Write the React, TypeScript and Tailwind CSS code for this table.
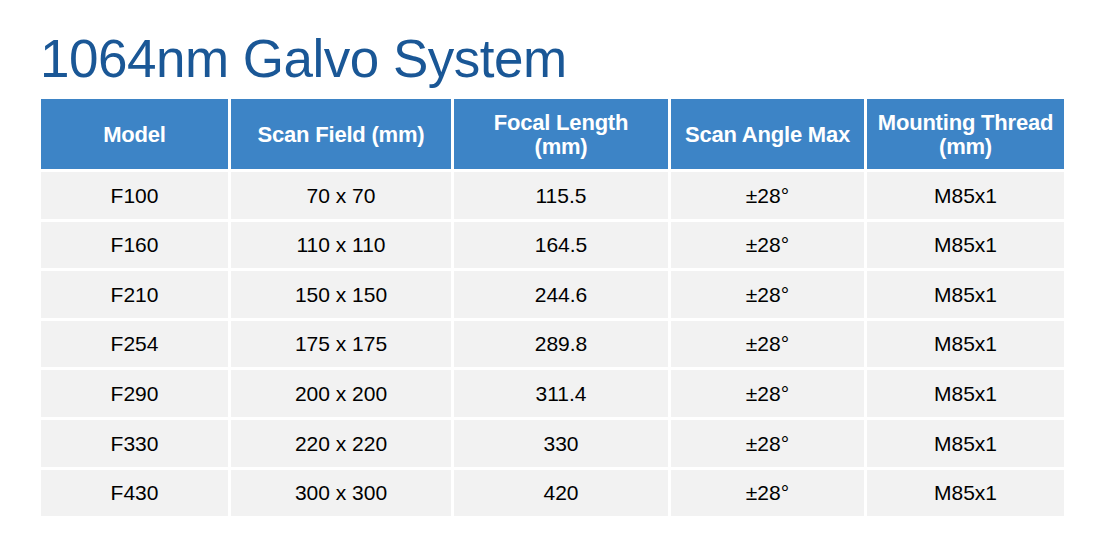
const headers = [
  ["Model"],
  ["Scan Field (mm)"],
  ["Focal Length", "(mm)"],
  ["Scan Angle Max"],
  ["Mounting Thread", "(mm)"],
];

const rows = [
  ["F100", "70 x 70", "115.5", "±28°", "M85x1"],
  ["F160", "110 x 110", "164.5", "±28°", "M85x1"],
  ["F210", "150 x 150", "244.6", "±28°", "M85x1"],
  ["F254", "175 x 175", "289.8", "±28°", "M85x1"],
  ["F290", "200 x 200", "311.4", "±28°", "M85x1"],
  ["F330", "220 x 220", "330", "±28°", "M85x1"],
  ["F430", "300 x 300", "420", "±28°", "M85x1"],
];

export default function App() {
  return (
    <div className="w-[1103px] h-[556px] bg-white font-['Liberation_Sans',Arial,sans-serif]">
      <div className="pl-[41px] pt-[29px]">
        <h1 className="text-[53px] leading-[60px] tracking-[-0.5px] text-[#1a5796] -ml-[1px]">
          1064nm Galvo System
        </h1>
        <div className="mt-[10px] grid grid-cols-[187px_220px_214px_193px_197px] gap-[3px] w-[1023px]">
          {headers.map((h, i) => (
            <div
              key={i}
              className="h-[70px] pt-[2px] bg-[#3d84c6] text-white font-bold text-[22px] leading-[24px] tracking-[-0.2px] flex flex-col items-center justify-center text-center"
            >
              {h.map((line) => (
                <span key={line}>{line}</span>
              ))}
            </div>
          ))}
          {rows.map((r) =>
            r.map((c, j) => (
              <div
                key={r[0] + j}
                className="h-[46.6px] bg-[#f2f2f2] text-black text-[21px] flex items-center justify-center"
              >
                {c}
              </div>
            ))
          )}
        </div>
      </div>
    </div>
  );
}
